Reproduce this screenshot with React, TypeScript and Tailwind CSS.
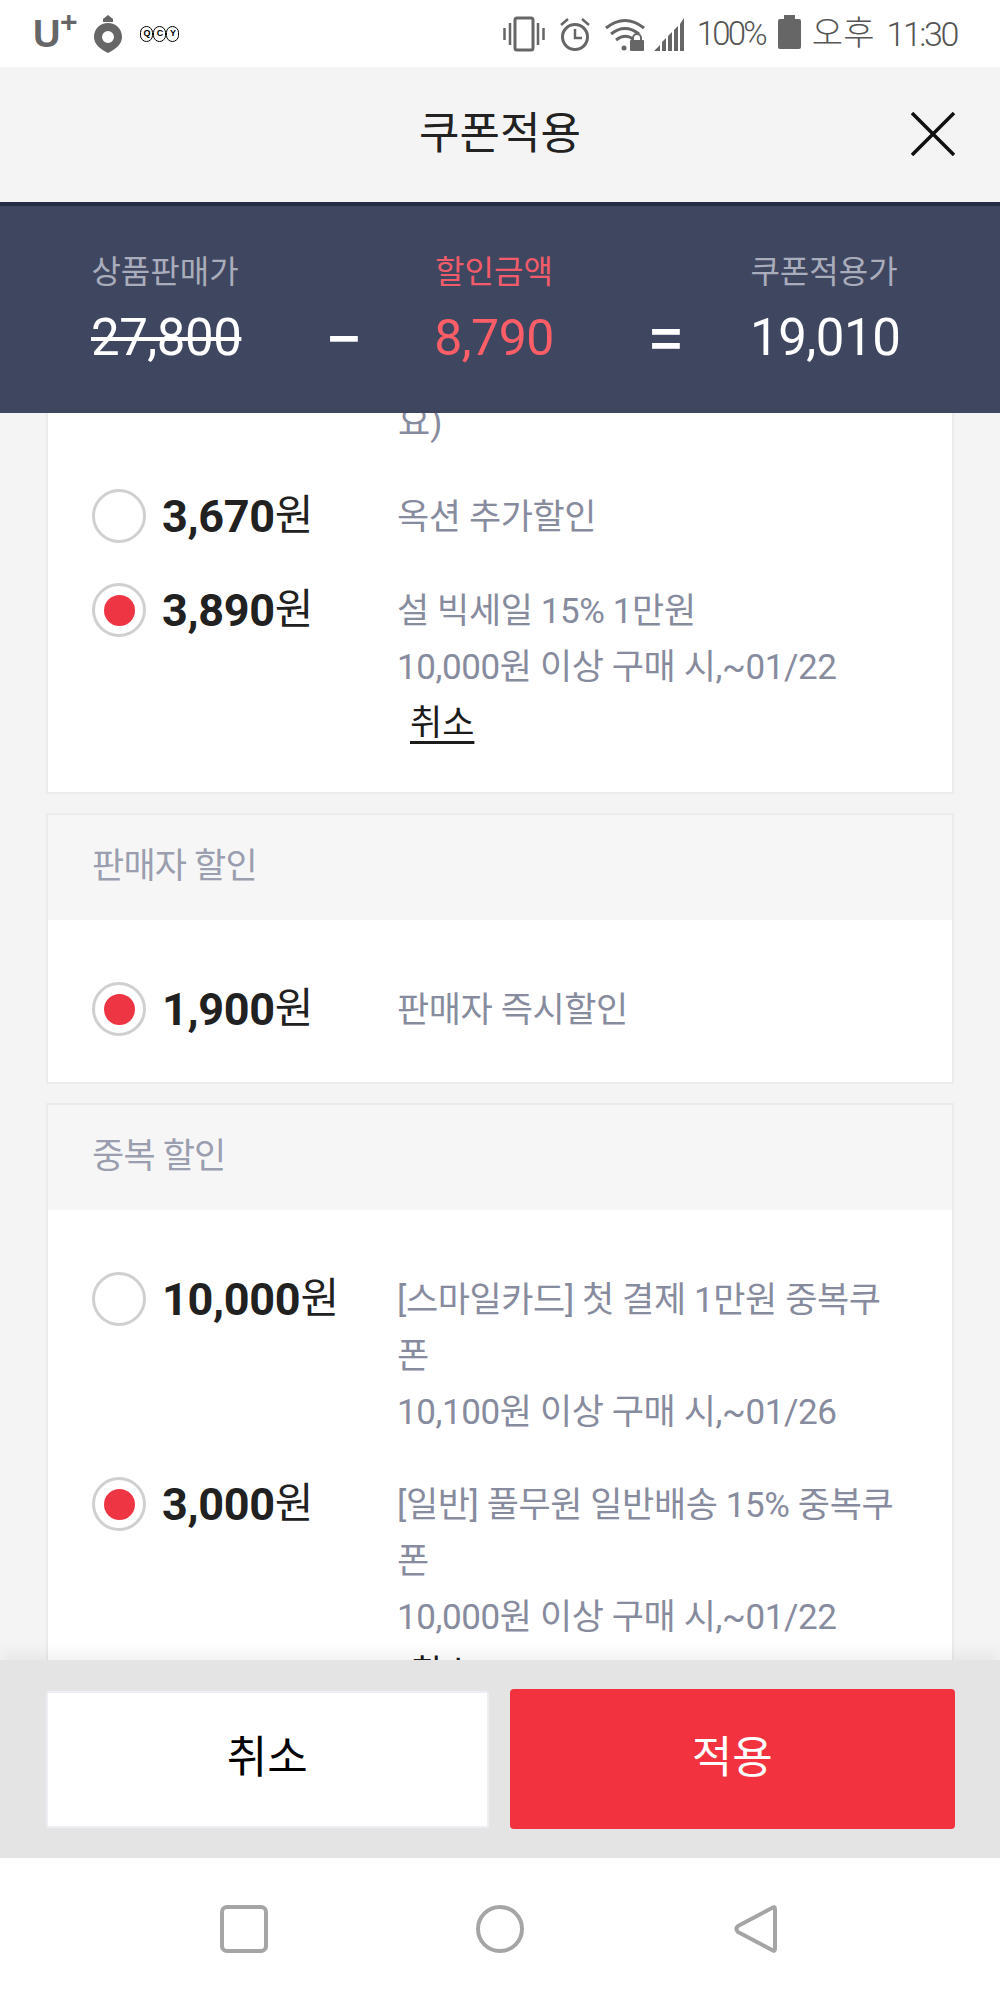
const sans = "font-['Roboto','Noto_Sans_CJK_KR',sans-serif]";

type Coupon = {
  amount: string;
  lines: string[];
  checked?: boolean;
  cancel?: boolean;
};

function Radio({ checked }: { checked?: boolean }) {
  return (
    <span className="flex h-[54px] w-[54px] shrink-0 items-center justify-center rounded-full border-[3px] border-[#cfd0d0] bg-white">
      {checked ? <span className="h-[31px] w-[31px] rounded-full bg-[#ee3543]" /> : null}
    </span>
  );
}

function CouponRow({ coupon }: { coupon: Coupon }) {
  return (
    <div className="flex items-start">
      <Radio checked={coupon.checked} />
      <div className="ml-[16px] flex h-[54px] w-[235px] shrink-0 items-center text-[45px] leading-none text-[#212121]">
        <span className="font-bold tracking-[-0.3px]">{coupon.amount}</span>
        <span className="text-[42px] font-normal">원</span>
      </div>
      <div className="-mb-[1px] mt-[1px] text-[35px] leading-[56px] tracking-[-0.4px] text-[#878b9e]">
        {coupon.lines.map((line) => (
          <div key={line}>{line}</div>
        ))}
        {coupon.cancel ? (
          <div className="pl-[13px] tracking-normal text-[#1c1c1c] underline decoration-[3px] underline-offset-[6px]">취소</div>
        ) : null}
      </div>
    </div>
  );
}

function Section({ title, coupons }: { title: string; coupons: Coupon[] }) {
  return (
    <section className="mt-[19px] border-2 border-[#ebebeb] bg-white">
      <div className="flex h-[105px] items-center bg-[#f6f6f7] pl-[44px] text-[35px] tracking-[-0.8px] text-[#9a9eae]">{title}</div>
      <div className="flex flex-col gap-[37px] pb-[44px] pl-[44px] pt-[62px]">
        {coupons.map((c) => (
          <CouponRow key={c.amount} coupon={c} />
        ))}
      </div>
    </section>
  );
}

function StatusIcons() {
  return (
    <svg width="186" height="36" viewBox="0 0 186 36" className="text-[#666]" fill="none" stroke="currentColor">
      {/* vibrate */}
      <rect x="12" y="2" width="18" height="32" rx="2" strokeWidth="3" />
      <path d="M7 7v22M1.500 12v12M35 7v22M40.500 12v12" strokeWidth="2.500" />
      {/* alarm */}
      <circle cx="72" cy="21" r="12.500" strokeWidth="3" />
      <path d="M72 13v9h7M58 9l7-6M86 9l-7-6" strokeWidth="2.500" />
      {/* wifi */}
      <path d="M103 12q19-15 38 0M108 18q14-11 28 0M113 24q9-7 17-1" strokeWidth="3" />
      <circle cx="121" cy="32" r="2.500" fill="currentColor" stroke="none" />
      <rect x="127" y="24" width="14" height="11" rx="1" fill="currentColor" stroke="none" />
      <path d="M130 25v-3a4 4 0 0 1 8 0v3" strokeWidth="2" />
      {/* signal */}
      <path d="M151 35l6-6v6zM159 26l4-4v13h-4zM165 20l4-4v19h-4zM171 14l4-4v25h-4zM177 8l4-6v33h-4z" fill="currentColor" stroke="none" />
    </svg>
  );
}

export default function App() {
  return (
    <div className={`${sans} relative flex h-[2000px] w-[1000px] flex-col overflow-hidden bg-[#f4f4f4]`}>
      {/* status bar */}
      <div className="flex h-[67px] shrink-0 items-center justify-between bg-white pl-[33px] pr-[43px] text-[#666]">
        <div className="flex items-center">
          <span className="relative font-['Liberation_Sans',sans-serif] text-[38px] font-bold leading-none">
            U<span className="absolute -top-[8px] left-[27px] text-[30px]">+</span>
          </span>
          <svg width="30" height="38" viewBox="0 0 30 38" className="ml-[33px]">
            <path d="M15 0l5 4v3h-10v-3z" fill="#666" />
            <path fillRule="evenodd" d="M15 8c8 0 14 6 14 14 0 7-6 12-14 16-8-4-14-9-14-16 0-8 6-14 14-14zm0 8a6 6 0 1 0 0 12 6 6 0 0 0 0-12z" fill="#666" />
          </svg>
          <div className="ml-[17px] flex font-['Liberation_Sans',sans-serif] text-[9px] font-bold leading-none text-black">
            {["Q", "C", "Y"].map((l) => (
              <span key={l} className="flex h-[16px] w-[13px] items-center justify-center rounded-full border border-black">{l}</span>
            ))}
          </div>
        </div>
        <div className="flex items-center">
          <StatusIcons />
          <span className="ml-[8px] text-[33px] font-light tracking-[-2.8px] text-[#555]">100%</span>
          <span className="relative ml-[13px] h-[30px] w-[23px] rounded-[2px] bg-[#666]">
            <span className="absolute -top-[4px] left-[6px] h-[4px] w-[11px] bg-[#666]" />
          </span>
          <span className="-mt-[2px] ml-[11px] text-[34px] font-light leading-none text-[#555]">오후</span>
          <span className="ml-[12px] text-[34px] font-light leading-none tracking-[-2.4px] text-[#555]">11:30</span>
        </div>
      </div>

      {/* title */}
      <div className="relative flex h-[135px] shrink-0 items-center justify-center bg-[#f4f4f4]">
        <h1 className="pb-[2px] text-[44px] font-normal text-[#222]">쿠폰적용</h1>
        <svg width="44" height="44" viewBox="0 0 44 44" className="absolute right-[45px] top-[45px]" stroke="#111" strokeWidth="3.500" fill="none">
          <path d="M1 1l42 42M43 1L1 43" />
        </svg>
      </div>

      {/* summary */}
      <div className="relative z-10 flex h-[211px] shrink-0 border-t-4 border-[#262c44] bg-[#3f4660] pl-[91px] pt-[41px]">
        <div className="w-[148px] text-center">
          <div className="whitespace-nowrap text-[32px] leading-[50px] text-[#a9acbb]">상품판매가</div>
          <div className="mt-[11px] whitespace-nowrap text-[51px] leading-[60px] tracking-[-0.5px] text-white line-through decoration-[4px]">27,800</div>
        </div>
        <div className="ml-[89px] mt-[59px] w-[29px] text-center font-['Noto_Sans_CJK_KR',sans-serif] text-[54px] font-bold leading-[60px] text-white">−</div>
        <div className="ml-[77px] w-[120px] text-center">
          <div className="whitespace-nowrap text-[32px] leading-[50px] text-[#f25c6a]">할인금액</div>
          <div className="mt-[11px] text-[50px] leading-[60px] tracking-[-0.5px] text-[#ff5e68]">8,790</div>
        </div>
        <div className="ml-[96px] mt-[59px] w-[28px] text-center font-['Noto_Sans_CJK_KR',sans-serif] text-[54px] font-bold leading-[60px] text-white">=</div>
        <div className="ml-[72px] w-[148px] text-center">
          <div className="whitespace-nowrap text-[32px] leading-[50px] text-[#a9acbb]">쿠폰적용가</div>
          <div className="mt-[11px] whitespace-nowrap text-[51px] leading-[60px] tracking-[-0.5px] text-white">19,010</div>
        </div>
      </div>

      {/* coupon list, scrolled so the first card is cut off */}
      <div className="min-h-0 flex-1 overflow-hidden px-[46px]">
        <section className="-mt-[17px] border-x-2 border-b-2 border-[#ebebeb] bg-white pb-[41px] pl-[44px]">
          <div className="pl-[306px] text-[35px] leading-[56px] text-[#878b9e]">요)</div>
          <div className="mt-[37px] flex flex-col gap-[38px]">
            <CouponRow coupon={{ amount: "3,670", lines: ["옥션 추가할인"] }} />
            <CouponRow coupon={{ amount: "3,890", checked: true, cancel: true, lines: ["설 빅세일 15% 1만원", "10,000원 이상 구매 시,~01/22"] }} />
          </div>
        </section>
        <Section title="판매자 할인" coupons={[{ amount: "1,900", checked: true, lines: ["판매자 즉시할인"] }]} />
        <Section
          title="중복 할인"
          coupons={[
            { amount: "10,000", lines: ["[스마일카드] 첫 결제 1만원 중복쿠", "폰", "10,100원 이상 구매 시,~01/26"] },
            { amount: "3,000", checked: true, cancel: true, lines: ["[일반] 풀무원 일반배송 15% 중복쿠", "폰", "10,000원 이상 구매 시,~01/22"] },
          ]}
        />
      </div>

      {/* bottom buttons */}
      <div className="relative z-10 flex h-[198px] shrink-0 items-center gap-[21px] bg-[#e4e4e4] pl-[46px] pr-[45px] shadow-[0_-8px_14px_rgba(0,0,0,0.05)]">
        <button className="h-[137px] w-[443px] rounded-[2px] border-2 border-[#eceef3] bg-white pb-[2px] text-[44px] text-black">취소</button>
        <button className="h-[140px] w-[446px] rounded-[4px] bg-[#f2323e] pb-[2px] text-[44px] text-white">적용</button>
      </div>

      {/* nav bar */}
      <div className="flex h-[142px] shrink-0 items-center justify-center bg-white">
        <svg width="560" height="48" viewBox="0 0 560 48" fill="none" stroke="#a5a5a5" strokeWidth="4">
          <rect x="2" y="2" width="44" height="44" rx="5" />
          <circle cx="280" cy="24" r="22" />
          <path d="M555 4v40q0 3-3 1L518 27q-3-3 0-6L552 3q3-2 3 1z" strokeLinejoin="round" />
        </svg>
      </div>
    </div>
  );
}
